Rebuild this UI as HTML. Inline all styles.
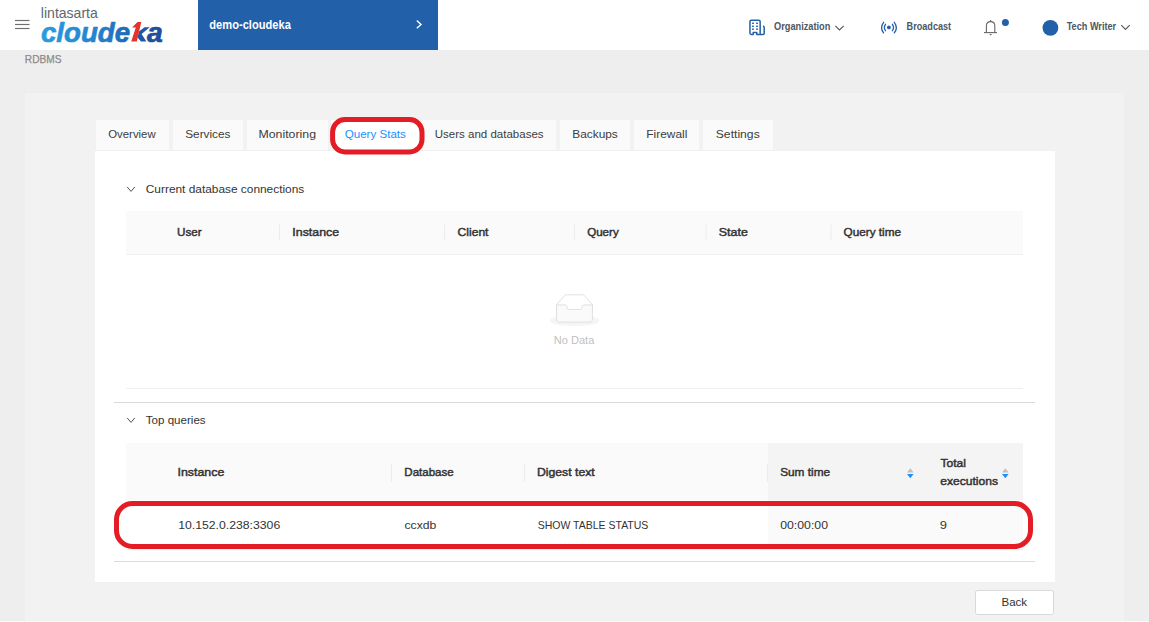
<!DOCTYPE html>
<html><head><meta charset="utf-8"><style>
html,body{margin:0;padding:0;width:1149px;height:622px;overflow:hidden;background:#eeeeee}
svg text{font-family:"Liberation Sans", sans-serif;}
</style></head><body>
<svg width="1149" height="622" viewBox="0 0 1149 622" style="display:block">
<rect x="0" y="0" width="1149" height="622" fill="#eeeeee" />
<rect x="0" y="0" width="1149" height="50" fill="#ffffff" />
<rect x="25" y="93" width="1099" height="529" fill="#f2f2f2" />
<rect x="0" y="621" width="1149" height="1" fill="#fafafa" />
<g stroke="#707070" stroke-width="1.2"><line x1="15" y1="20.5" x2="29.5" y2="20.5"/><line x1="15" y1="24.5" x2="29.5" y2="24.5"/><line x1="15" y1="28.5" x2="29.5" y2="28.5"/></g>
<text x="40.85" y="18.00" font-size="15" font-weight="normal" font-style="normal" fill="#5d6872" textLength="56.95" lengthAdjust="spacingAndGlyphs" >lintasarta</text>
<defs><linearGradient id="lg" x1="41" y1="0" x2="162" y2="0" gradientUnits="userSpaceOnUse"><stop offset="0" stop-color="#2a9be0"/><stop offset="0.45" stop-color="#2383cf"/><stop offset="1" stop-color="#1d4f9d"/></linearGradient></defs>
<text x="40.95" y="42.00" font-size="28.4" font-weight="bold" font-style="italic" fill="url(#lg)" textLength="89.12" lengthAdjust="spacingAndGlyphs" stroke="url(#lg)" stroke-width="0.7">cloude</text>
<text x="147.06" y="42.00" font-size="28.4" font-weight="bold" font-style="italic" fill="#1d4f9d" textLength="15.77" lengthAdjust="spacingAndGlyphs" stroke="#1d4f9d" stroke-width="0.7">a</text>
<path d="M137.6 37.6 L138.9 31.6 L144.6 27.2 L149.8 27.2 L141.6 34.0 L146.4 41.6 L141.0 41.6 Z" fill="#1f56a6"/>
<path d="M131.2 41.6 L136.8 41.6 L141.3 22.1 L137.5 22.1 L132.1 27.5 L135.8 27.5 Z" fill="#e5322b"/>
<rect x="198" y="0" width="240" height="50" fill="#2260a9" />
<text x="209.34" y="29.00" font-size="13" font-weight="bold" font-style="normal" fill="#ffffff" textLength="81.49" lengthAdjust="spacingAndGlyphs" >demo-cloudeka</text>
<path d="M416.8 20.6 L421 24.4 L416.8 28.2" fill="none" stroke="#fff" stroke-width="1.4"/>
<g fill="none" stroke="#2360a9" stroke-width="1.5" stroke-linejoin="round"><path d="M753.2 34.4 V32.6 H756.8 V34.4 H760.15 V21.5 Q760.15 20.15 758.8 20.15 H751.3 Q749.95 20.15 749.95 21.5 V33 Q749.95 34.4 751.3 34.4 Z"/><path d="M760.15 34.4 H763.2 Q764.2 34.4 764.2 33.4 V27.4 Q764.2 26.3 763 26"/></g><g fill="#2360a9"><rect x="752" y="22.6" width="2" height="1.3"/><rect x="756" y="22.6" width="2" height="1.3"/><rect x="752" y="25.6" width="2" height="1.3"/><rect x="756" y="25.6" width="2" height="1.3"/><rect x="752" y="28.5" width="2" height="1.3"/><rect x="756" y="28.5" width="2" height="1.3"/></g>
<text x="774.12" y="29.80" font-size="11.3" font-weight="bold" font-style="normal" fill="#4e5763" textLength="56.25" lengthAdjust="spacingAndGlyphs" >Organization</text>
<path d="M835.3 25.9 L839.5 30 L843.7 25.9" fill="none" stroke="#555" stroke-width="1.1"/>
<g fill="none" stroke="#2360a9" stroke-width="1.3" stroke-linecap="round"><path d="M883.6 22.3 Q879.6 27.6 883.6 32.9"/><path d="M894.3 22.3 Q898.3 27.6 894.3 32.9"/><path d="M885.5 24.3 Q883.2 27.5 885.5 30.7"/><path d="M892.4 24.3 Q894.7 27.5 892.4 30.7"/></g><circle cx="888.9" cy="27.4" r="1.9" fill="#2360a9"/>
<text x="906.59" y="30.20" font-size="11.3" font-weight="bold" font-style="normal" fill="#4e5763" textLength="44.52" lengthAdjust="spacingAndGlyphs" >Broadcast</text>
<g fill="none" stroke="#666" stroke-width="1.1"><path d="M986.4 32.3 V25.8 Q986.4 21.6 990.6 21.6 Q994.8 21.6 994.8 25.8 V32.3"/><line x1="984" y1="32.6" x2="997" y2="32.6"/><line x1="990.6" y1="20" x2="990.6" y2="21.6"/></g><path d="M989.2 34 H992 L990.6 35.5 Z" fill="#666"/><circle cx="1005.4" cy="22.5" r="3.5" fill="#2260a9"/>
<circle cx="1050.4" cy="27.8" r="7.9" fill="#2260a9"/>
<text x="1066.70" y="29.90" font-size="11.3" font-weight="bold" font-style="normal" fill="#4e5763" textLength="49.44" lengthAdjust="spacingAndGlyphs" >Tech Writer</text>
<path d="M1121.3 25.2 L1125.5 29.4 L1129.7 25.2" fill="none" stroke="#555" stroke-width="1.1"/>
<text x="24.87" y="62.80" font-size="11" font-weight="normal" font-style="normal" fill="#8a8a8a" textLength="36.60" lengthAdjust="spacingAndGlyphs"  stroke="#8a8a8a" stroke-width="0.25">RDBMS</text>
<rect x="96" y="120" width="73" height="31" fill="#fafafa" />
<rect x="173" y="120" width="70" height="31" fill="#fafafa" />
<rect x="247" y="120" width="81" height="31" fill="#fafafa" />
<rect x="331" y="120" width="89" height="31" fill="#ffffff" />
<rect x="421" y="120" width="135" height="31" fill="#fafafa" />
<rect x="560" y="120" width="70" height="31" fill="#fafafa" />
<rect x="634" y="120" width="65" height="31" fill="#fafafa" />
<rect x="703" y="120" width="70" height="31" fill="#fafafa" />
<rect x="95" y="150" width="960" height="1" fill="#f0f0f0" />
<rect x="334" y="150" width="86" height="1" fill="#ffffff" />
<rect x="95" y="151" width="960" height="431" fill="#ffffff" />
<text x="108.26" y="137.90" font-size="11.2" font-weight="normal" font-style="normal" fill="#3c3c3c" textLength="47.41" lengthAdjust="spacingAndGlyphs" >Overview</text>
<text x="185.27" y="137.90" font-size="11.2" font-weight="normal" font-style="normal" fill="#3c3c3c" textLength="45.16" lengthAdjust="spacingAndGlyphs" >Services</text>
<text x="258.49" y="137.90" font-size="11.2" font-weight="normal" font-style="normal" fill="#3c3c3c" textLength="57.50" lengthAdjust="spacingAndGlyphs" >Monitoring</text>
<text x="344.75" y="137.90" font-size="11.2" font-weight="normal" font-style="normal" fill="#1890ff" textLength="61.07" lengthAdjust="spacingAndGlyphs" >Query Stats</text>
<text x="434.81" y="137.90" font-size="11.2" font-weight="normal" font-style="normal" fill="#3c3c3c" textLength="108.80" lengthAdjust="spacingAndGlyphs" >Users and databases</text>
<text x="572.22" y="137.90" font-size="11.2" font-weight="normal" font-style="normal" fill="#3c3c3c" textLength="45.61" lengthAdjust="spacingAndGlyphs" >Backups</text>
<text x="646.32" y="137.90" font-size="11.2" font-weight="normal" font-style="normal" fill="#3c3c3c" textLength="40.97" lengthAdjust="spacingAndGlyphs" >Firewall</text>
<text x="715.75" y="137.90" font-size="11.2" font-weight="normal" font-style="normal" fill="#3c3c3c" textLength="43.99" lengthAdjust="spacingAndGlyphs" >Settings</text>
<path d="M127.2 186.9 L131 191.4 L134.8 186.9" fill="none" stroke="#555" stroke-width="1"/>
<text x="145.80" y="193.00" font-size="11.2" font-weight="normal" font-style="normal" fill="#333" textLength="158.43" lengthAdjust="spacingAndGlyphs" >Current database connections</text>
<rect x="126" y="211" width="897" height="43" fill="#fafafa" />
<rect x="126" y="254" width="897" height="1" fill="#f0f0f0" />
<rect x="279.0" y="224.5" width="1" height="16" fill="#ececec" />
<rect x="444.0" y="224.5" width="1" height="16" fill="#ececec" />
<rect x="574.0" y="224.5" width="1" height="16" fill="#ececec" />
<rect x="705.5" y="224.5" width="1" height="16" fill="#ececec" />
<rect x="830.5" y="224.5" width="1" height="16" fill="#ececec" />
<text x="177.10" y="236.00" font-size="11.2" font-weight="normal" font-style="normal" fill="#333" textLength="24.59" lengthAdjust="spacingAndGlyphs"  stroke="#333" stroke-width="0.45">User</text>
<text x="292.36" y="236.00" font-size="11.2" font-weight="normal" font-style="normal" fill="#333" textLength="46.69" lengthAdjust="spacingAndGlyphs"  stroke="#333" stroke-width="0.45">Instance</text>
<text x="457.59" y="236.00" font-size="11.2" font-weight="normal" font-style="normal" fill="#333" textLength="30.90" lengthAdjust="spacingAndGlyphs"  stroke="#333" stroke-width="0.45">Client</text>
<text x="587.15" y="236.00" font-size="11.2" font-weight="normal" font-style="normal" fill="#333" textLength="31.57" lengthAdjust="spacingAndGlyphs"  stroke="#333" stroke-width="0.45">Query</text>
<text x="718.73" y="236.00" font-size="11.2" font-weight="normal" font-style="normal" fill="#333" textLength="29.12" lengthAdjust="spacingAndGlyphs"  stroke="#333" stroke-width="0.45">State</text>
<text x="843.54" y="236.00" font-size="11.2" font-weight="normal" font-style="normal" fill="#333" textLength="57.48" lengthAdjust="spacingAndGlyphs"  stroke="#333" stroke-width="0.45">Query time</text>
<svg x="549.5" y="294" width="50" height="32" viewBox="0 0 64 41"><g transform="translate(0 1)" fill="none" fill-rule="evenodd"><ellipse fill="#f5f5f5" cx="32" cy="33" rx="32" ry="7"/><g fill-rule="nonzero" stroke="#d9d9d9"><path d="M55 12.76L44.854 1.258C44.367.474 43.656 0 42.907 0H21.093c-.749 0-1.46.474-1.947 1.257L9 12.761V22h46v-9.24z"/><path d="M41.613 15.931c0-1.605.994-2.93 2.227-2.931H55v18.137C55 33.26 53.68 35 52.05 35h-40.1C10.32 35 9 33.259 9 31.137V13h11.16c1.233 0 2.227 1.323 2.227 2.928v.022c0 1.605 1.005 2.901 2.237 2.901h14.752c1.232 0 2.237-1.308 2.237-2.913v-.007z" fill="#fafafa"/></g></g></svg>
<text x="553.69" y="343.50" font-size="11.2" font-weight="normal" font-style="normal" fill="#bfbfbf" textLength="40.61" lengthAdjust="spacingAndGlyphs" >No Data</text>
<rect x="126" y="388" width="897" height="1" fill="#f0f0f0" />
<rect x="114" y="402" width="921" height="1" fill="#d9d9d9" />
<path d="M127.2 417.9 L131 422.4 L134.8 417.9" fill="none" stroke="#555" stroke-width="1"/>
<text x="145.75" y="423.70" font-size="11.2" font-weight="normal" font-style="normal" fill="#333" textLength="59.86" lengthAdjust="spacingAndGlyphs" >Top queries</text>
<rect x="126" y="443" width="642" height="57" fill="#fafafa" />
<rect x="768" y="443" width="255" height="57" fill="#f4f4f4" />
<rect x="768" y="500" width="255" height="50" fill="#fafafa" />
<rect x="126" y="549" width="897" height="1" fill="#f0f0f0" />
<rect x="391.0" y="464" width="1" height="18" fill="#ececec" />
<rect x="524.0" y="464" width="1" height="18" fill="#ececec" />
<rect x="767.0" y="464" width="1" height="18" fill="#ececec" />
<text x="177.46" y="476.40" font-size="11.2" font-weight="normal" font-style="normal" fill="#333" textLength="46.90" lengthAdjust="spacingAndGlyphs"  stroke="#333" stroke-width="0.45">Instance</text>
<text x="404.35" y="476.40" font-size="11.2" font-weight="normal" font-style="normal" fill="#333" textLength="49.36" lengthAdjust="spacingAndGlyphs"  stroke="#333" stroke-width="0.45">Database</text>
<text x="537.00" y="476.40" font-size="11.2" font-weight="normal" font-style="normal" fill="#333" textLength="57.69" lengthAdjust="spacingAndGlyphs"  stroke="#333" stroke-width="0.45">Digest text</text>
<text x="780.16" y="476.40" font-size="11.2" font-weight="normal" font-style="normal" fill="#333" textLength="49.96" lengthAdjust="spacingAndGlyphs"  stroke="#333" stroke-width="0.45">Sum time</text>
<text x="940.44" y="467.30" font-size="11.2" font-weight="normal" font-style="normal" fill="#333" textLength="25.53" lengthAdjust="spacingAndGlyphs"  stroke="#333" stroke-width="0.45">Total</text>
<text x="940.19" y="485.30" font-size="11.2" font-weight="normal" font-style="normal" fill="#333" textLength="57.75" lengthAdjust="spacingAndGlyphs"  stroke="#333" stroke-width="0.45">executions</text>
<path d="M907.0 472.4 L910.3 468.2 L913.5999999999999 472.4 Z" fill="#bfbfbf"/><path d="M907.0 474 L910.3 478.3 L913.5999999999999 474 Z" fill="#1890ff"/>
<path d="M1002.0 472.4 L1005.3 468.2 L1008.5999999999999 472.4 Z" fill="#bfbfbf"/><path d="M1002.0 474 L1005.3 478.3 L1008.5999999999999 474 Z" fill="#1890ff"/>
<text x="178.17" y="529.30" font-size="11.2" font-weight="normal" font-style="normal" fill="#333" textLength="102.07" lengthAdjust="spacingAndGlyphs" >10.152.0.238:3306</text>
<text x="404.48" y="529.30" font-size="11.2" font-weight="normal" font-style="normal" fill="#333" textLength="31.83" lengthAdjust="spacingAndGlyphs" >ccxdb</text>
<text x="537.73" y="529.30" font-size="11.2" font-weight="normal" font-style="normal" fill="#333" textLength="110.64" lengthAdjust="spacingAndGlyphs" >SHOW TABLE STATUS</text>
<text x="780.22" y="529.30" font-size="11.2" font-weight="normal" font-style="normal" fill="#333" textLength="47.76" lengthAdjust="spacingAndGlyphs" >00:00:00</text>
<text x="939.89" y="529.30" font-size="11.2" font-weight="normal" font-style="normal" fill="#333" textLength="7.22" lengthAdjust="spacingAndGlyphs" >9</text>
<rect x="114" y="561" width="921" height="1" fill="#dcdcdc" />
<rect x="975.5" y="590.5" width="78" height="24" rx="2" fill="#fff" stroke="#d9d9d9"/>
<text x="1001.45" y="605.90" font-size="11.2" font-weight="normal" font-style="normal" fill="#333" textLength="25.63" lengthAdjust="spacingAndGlyphs" >Back</text>
<rect x="332.6" y="119.6" width="89.4" height="32.3" rx="12.5" fill="none" stroke="#e41c26" stroke-width="5"/>
<rect x="116.5" y="503.5" width="914" height="43" rx="16" fill="none" stroke="#e41c26" stroke-width="5"/>
</svg></body></html>
